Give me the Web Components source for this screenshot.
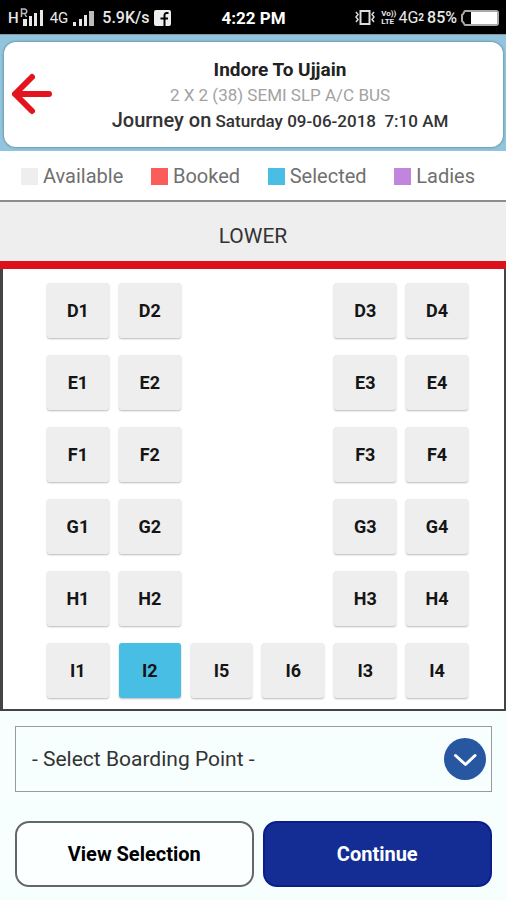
<!DOCTYPE html>
<html lang="en">
<head>
<meta charset="utf-8">
<meta name="viewport" content="width=device-width, initial-scale=1">
<title>Select seats</title>
<style>
  html, body { margin: 0; min-height: 100%; }
  body {
    font-family: Roboto, "Liberation Sans", sans-serif;
    background: #f7fefe;
    color: #222;
  }
</style>
</head>
<body>
<seat-page></seat-page>

<script>
// Shared base: attach an open root and fill it from a string.
class BaseElement extends HTMLElement {
  constructor() {
    super();
    this.attachShadow({ mode: "open" });
  }
  connectedCallback() { this.shadowRoot.innerHTML = this.template(); }
}

// <status-bar> — phone status line: network, clock, battery.
class StatusBar extends BaseElement {
  template() {
    return `
      <style>
        :host {
          display: grid;
          grid-template-columns: 1fr auto 1fr;
          align-items: center;
          height: 34px;
          padding: 2px 7px 0 8px;
          box-sizing: border-box;
          background: #000;
          color: #e8e8e8;
          font-size: 15px;
          line-height: 20px;
          font-weight: 500;
        }
        div { display: flex; align-items: center; }
        .right { justify-content: flex-end; }
        .time { font-size: 17px; font-weight: 700; color: #fff; }
        .net { margin: 0 5px 0 6px; font-weight: 400; }
        .speed { margin: 0 4px 0 7px; font-size: 16px; }
        .volte { margin: 0 2px 0 6px; font-size: 8px; line-height: 8px; font-weight: 700; }
        .four { font-size: 16px; font-weight: 400; }
        .sim { font-size: 10px; font-weight: 700; margin-right: 3px; }
        .pct { margin-right: 4px; font-size: 16px; }
        svg { display: block; flex: none; }
      </style>
      <div>
        <span>H</span>
        <svg width="25" height="20" viewBox="0 0 25 20" fill="#e8e8e8" aria-hidden="true">
          <path d="M2.500 9V1h3a2 2 0 0 1 0 4.500h-3M5.500 5.500l2 3.500" fill="none" stroke="#bbb" stroke-width="1.500"/>
          <path d="M4 11h4v7H4zM10 8h3v10h-3zM15 5h3v13h-3zM21 2h3v16h-3z"/>
        </svg>
        <span class="net">4G</span>
        <svg width="22" height="20" viewBox="0 0 22 20" fill="#e8e8e8" aria-hidden="true">
          <path d="M0 14h3v4H0zM6 11h3v7H6zM11 7h3v11h-3z"/>
          <path d="M16 3h5v15h-5z" fill="#bbb"/>
        </svg>
        <span class="speed">5.9K/s</span>
        <svg width="17" height="16" viewBox="0 0 17 16" aria-hidden="true">
          <rect width="17" height="16" rx="2" fill="#eee"/>
          <path d="M14.500 3h-2a2 2 0 0 0-2 2v11M6.500 8.500h7.500" fill="none" stroke="#000" stroke-width="2"/>
        </svg>
      </div>
      <div class="time">4:22 PM</div>
      <div class="right">
        <svg width="20" height="18" viewBox="0 0 20 18" fill="none" stroke="#ddd" aria-hidden="true">
          <rect x="5.500" y="2" width="9" height="13" stroke-width="2"/>
          <path d="M1 3l2 2.500L1 8l2 2.500L1 13M19 3l-2 2.500L19 8l-2 2.500 2 2.500" stroke-width="1.500"/>
        </svg>
        <span class="volte">Vo))<br>LTE</span>
        <span class="four">4G</span><span class="sim">2</span>
        <span class="pct">85%</span>
        <svg width="38" height="16" viewBox="0 0 38 16" aria-hidden="true">
          <path d="M4 1h31a2 2 0 0 1 2 2v10a2 2 0 0 1-2 2H4c-1 0-1-3-3-4V5c2-1 2-4 3-4z" fill="#000" stroke="#aaa" stroke-width="2"/>
          <path d="M10 2h26v12H10z" fill="#fff"/>
        </svg>
      </div>`;
  }
}

// <trip-header> — back button and trip lines passed in through slots.
class TripHeader extends BaseElement {
  template() {
    return `
      <style>
        :host {
          display: block;
          padding: 7px 3px 4px 4px;
          background: #92c5dd;
          border-top: 1px solid #8299a5;
          box-sizing: border-box;
        }
        header {
          display: grid;
          grid-template-columns: 56px 1fr;
          align-items: center;
          padding: 14px 0 12px;
          background: #fff;
          border-radius: 12px;
          box-shadow: 0 0 2px 1px #6d9cab;
        }
        button {
          justify-self: start;
          padding: 0 0 4px 6px;
          border: 0;
          background: none;
          cursor: pointer;
        }
        svg { display: block; }
        .lines { margin-right: 3px; text-align: center; }
        .route { margin: 0; font-size: 19px; line-height: 28px; font-weight: 700; }
        .bus { margin: 0; font-size: 17px; line-height: 22px; color: #a2a2a2; font-weight: 400; }
        .when { margin: 0; font-size: 17px; line-height: 28px; font-weight: 500; white-space: pre; color: #333; }
        .when b { font-size: 20px; font-weight: 500; }
      </style>
      <header>
        <button type="button" aria-label="Back">
          <svg width="44" height="44" viewBox="0 0 44 44" fill="none" stroke="#e3141e" stroke-width="6" stroke-linecap="round" stroke-linejoin="round">
            <path d="M22 5L5 22l17 17M5 22h34"/>
          </svg>
        </button>
        <div class="lines">
          <h1 class="route"><slot name="route"></slot></h1>
          <p class="bus"><slot name="bus"></slot></p>
          <p class="when"><b>Journey on</b> <slot name="when"></slot></p>
        </div>
      </header>`;
  }
}

// <legend-item color="..."> — colour swatch with its label.
class LegendItem extends BaseElement {
  template() {
    return `
      <style>
        :host { display: flex; align-items: center; gap: 5px; }
        i { width: 17px; height: 17px; background: ${this.getAttribute("color")}; }
      </style>
      <i></i><span><slot></slot></span>`;
  }
}

class SeatLegend extends BaseElement {
  template() {
    return `
      <style>
        :host {
          display: flex;
          justify-content: space-between;
          align-items: center;
          padding: 12px 31px 11px 21px;
          background: #fff;
          border-bottom: 2px solid #8d8d8d;
          font-size: 20px;
          line-height: 26px;
          color: #707070;
        }
      </style>
      <slot></slot>`;
  }
}

// <deck-title> — name of the deck above the seats.
class DeckTitle extends BaseElement {
  template() {
    return `
      <style>
        :host { display: block; background: #eee; border-bottom: 8px solid #dd1119; }
        h2 {
          margin: 0;
          padding: 20px 0 11px;
          font-size: 21px;
          line-height: 28px;
          font-weight: 400;
          text-align: center;
          color: #333;
        }
      </style>
      <h2><slot></slot></h2>`;
  }
}

// <seat-button label="D1" column="1" selected>
class SeatButton extends BaseElement {
  connectedCallback() {
    super.connectedCallback();
    this.style.gridColumn = this.getAttribute("column");
    this.shadowRoot.querySelector("button").addEventListener("click", e => {
      const on = this.toggleAttribute("selected");
      e.currentTarget.setAttribute("aria-pressed", on);
    });
  }
  template() {
    return `
      <style>
        :host { display: block; }
        button {
          display: block;
          width: 100%;
          height: 55px;
          padding: 0;
          border: 0;
          border-radius: 3px;
          background: #eee;
          box-shadow: 0 1px 2px rgba(0, 0, 0, .28);
          font: 700 18px/24px Roboto, "Liberation Sans", sans-serif;
          color: #151515;
          cursor: pointer;
        }
        :host([selected]) button { background: #49bee4; }
      </style>
      <button type="button" aria-pressed="${this.hasAttribute("selected")}">${this.getAttribute("label")}</button>`;
  }
}

// <seat-map rows="D E F"> — 2 x 2 rows with an aisle, full last row.
class SeatMap extends BaseElement {
  template() {
    const order = [["1", 1], ["2", 2], ["5", 3], ["6", 4], ["3", 5], ["4", 6]];
    const rows = this.getAttribute("rows").split(" ");
    const selected = this.getAttribute("selected");
    const seats = rows.flatMap((row, i) => order
      .filter(([, col]) => i === rows.length - 1 || col < 3 || col > 4)
      .map(([n, col]) => {
        const id = row + n;
        return `<seat-button label="${id}" column="${col}"${id === selected ? " selected" : ""}></seat-button>`;
      }));
    return `
      <style>
        :host {
          display: grid;
          grid-template-columns: repeat(6, 1fr);
          gap: 17px 10px;
          padding: 14px 36px 11px 44px;
          background: #fff;
          border: solid #444;
          border-width: 0 2px 2px 3px;
        }
      </style>
      ${seats.join("")}`;
  }
}

// <boarding-select> — native drop-down with a round arrow on its right end.
class BoardingSelect extends BaseElement {
  template() {
    return `
      <style>
        :host { display: grid; grid-template-columns: 1fr auto; align-items: center; }
        select {
          grid-area: 1 / 1 / 2 / 3;
          width: 100%;
          height: 66px;
          padding: 0 56px 0 16px;
          appearance: none;
          border: 1px solid #999;
          border-radius: 0;
          background: #f7fefe;
          font: 400 21px/28px Roboto, "Liberation Sans", sans-serif;
          color: #333;
        }
        svg { grid-area: 1 / 2; margin-right: 6px; pointer-events: none; }
      </style>
      <select aria-label="Boarding point"><option>- Select Boarding Point -</option></select>
      <svg width="42" height="42" viewBox="0 0 42 42" aria-hidden="true">
        <circle cx="21" cy="21" r="21" fill="#2757a0"/>
        <path d="M11.500 17.500L21.500 26.500L31 17.500" fill="none" stroke="#fff" stroke-width="3" stroke-linecap="round" stroke-linejoin="round"/>
      </svg>`;
  }
}

// <action-button primary> — large rounded button.
class ActionButton extends BaseElement {
  template() {
    return `
      <style>
        :host { display: block; }
        button {
          width: 100%;
          height: 66px;
          border: 2px solid #666;
          border-radius: 14px;
          background: #fbffff;
          font: 700 20px/26px Roboto, "Liberation Sans", sans-serif;
          color: #000;
          cursor: pointer;
        }
        :host([primary]) button { background: #132d95; border-color: #0b1d8b; color: #fff; }
      </style>
      <button type="button"><slot></slot></button>`;
  }
}

class SeatPage extends BaseElement {
  template() {
    return `
      <style>
        :host { display: block; }
        section { padding: 15px 14px 14px 15px; display: grid; gap: 29px; }
        .actions { display: grid; grid-template-columns: 238fr 229fr; gap: 9px; }
      </style>
      <status-bar></status-bar>
      <trip-header>
        <span slot="route">Indore To Ujjain</span>
        <span slot="bus">2 X 2 (38) SEMI SLP A/C BUS</span>
        <span slot="when">Saturday 09-06-2018  7:10 AM</span>
      </trip-header>
      <seat-legend>
        <legend-item color="#eee">Available</legend-item>
        <legend-item color="#fb5d5d">Booked</legend-item>
        <legend-item color="#49bde4">Selected</legend-item>
        <legend-item color="#c085dc">Ladies</legend-item>
      </seat-legend>
      <deck-title>LOWER</deck-title>
      <seat-map rows="D E F G H I" selected="I2"></seat-map>
      <section>
        <boarding-select></boarding-select>
        <div class="actions">
          <action-button>View Selection</action-button>
          <action-button primary>Continue</action-button>
        </div>
      </section>`;
  }
}

customElements.define("status-bar", StatusBar);
customElements.define("trip-header", TripHeader);
customElements.define("legend-item", LegendItem);
customElements.define("seat-legend", SeatLegend);
customElements.define("deck-title", DeckTitle);
customElements.define("seat-button", SeatButton);
customElements.define("seat-map", SeatMap);
customElements.define("boarding-select", BoardingSelect);
customElements.define("action-button", ActionButton);
customElements.define("seat-page", SeatPage);
</script>
</body>
</html>
